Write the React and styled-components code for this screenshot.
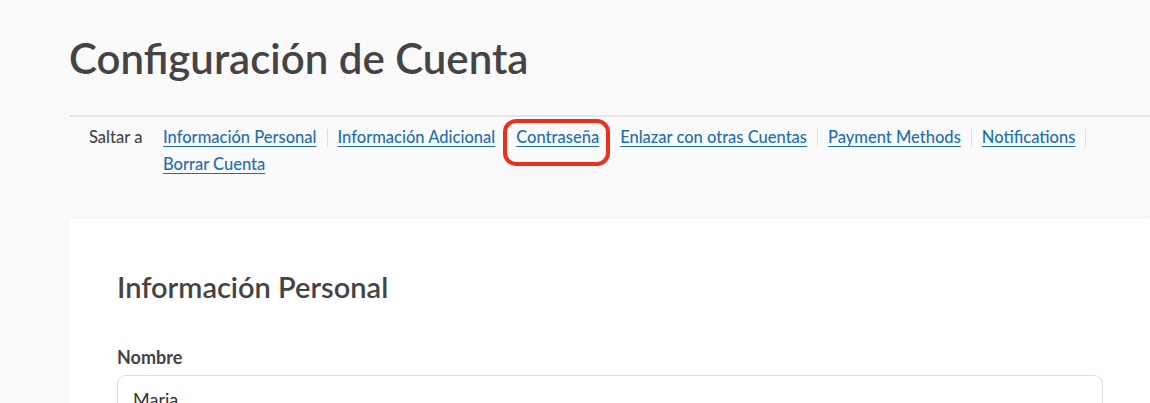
import React from 'react';
import styled, { createGlobalStyle } from 'styled-components';

const GlobalStyle = createGlobalStyle`
  html, body {
    margin: 0;
    padding: 0;
    background: #fafafa;
    overflow: hidden;
  }
  body {
    font-family: Lato, "Noto Sans", sans-serif;
    color: #444;
  }
`;

const links = [
  'Información Personal',
  'Información Adicional',
  'Contraseña',
  'Enlazar con otras Cuentas',
  'Payment Methods',
  'Notifications',
  'Borrar Cuenta',
];

const App = () => {
  return (
    <>
      <GlobalStyle />
      <Page>
        <Title>Configuración de Cuenta</Title>
        <JumpBar>
          <JumpLabel>Saltar a</JumpLabel>
          <JumpList>
            {links.map((label, i) => (
              <JumpItem key={label} last={i === links.length - 1}>
                <JumpLink href="#" highlight={label === 'Contraseña'}>
                  {label}
                </JumpLink>
              </JumpItem>
            ))}
          </JumpList>
        </JumpBar>
        <Card>
          <CardTitle>Información Personal</CardTitle>
          <Label>Nombre</Label>
          <Input defaultValue="Maria" />
        </Card>
      </Page>
    </>
  );
};

export default App;

const Page = styled.div`
  width: 1082px;
  padding: 28px 0 0 69px;
`;

const Title = styled.h1`
  margin: 0;
  font-size: 42px;
  font-weight: 600;
  line-height: 60px;
  color: #444;
  padding-bottom: 27px;
  border-bottom: 2px solid #e6e6e6;
`;

const JumpBar = styled.nav`
  display: flex;
  align-items: flex-start;
  padding: 7px 0 0 20px;
  font-size: 16.5px;
  line-height: 27px;
`;

const JumpLabel = styled.span`
  flex: none;
  width: 74px;
  color: #444;
  font-weight: 500;
`;

const JumpList = styled.ul`
  display: flex;
  flex-wrap: wrap;
  list-style: none;
  margin: 0;
  padding: 0;
  width: 945px;
`;

const JumpItem = styled.li`
  display: flex;
  align-items: center;
  &::after {
    content: '';
    display: ${props => (props.last ? 'none' : 'block')};
    width: 1px;
    height: 18px;
    margin: 0 10px;
    background: #ddd;
  }
`;

const JumpLink = styled.a`
  position: relative;
  color: #1f6fae;
  text-decoration: underline;
  text-underline-offset: 3px;
  font-weight: 500;
  &::before {
    content: '';
    display: ${props => (props.highlight ? 'block' : 'none')};
    position: absolute;
    left: -13px;
    right: -11px;
    top: -5px;
    bottom: -15px;
    border: 4px solid #e8321e;
    border-radius: 13px;
  }
`;

const Card = styled.section`
  margin-top: 41px;
  background: #fff;
  box-shadow: 0 0 6px rgba(0, 0, 0, 0.04);
  padding: 48px 48px 0 48px;
`;

const CardTitle = styled.h2`
  margin: 0;
  font-size: 29px;
  font-weight: 600;
  line-height: 40px;
  color: #444;
`;

const Label = styled.label`
  display: block;
  margin-top: 38px;
  font-size: 18px;
  font-weight: 700;
  line-height: 24px;
  color: #444;
`;

const Input = styled.input`
  display: block;
  box-sizing: border-box;
  width: 100%;
  height: 48px;
  margin-top: 6px;
  padding: 0 15px;
  border: 1px solid #dedede;
  border-radius: 9px;
  font-family: Lato, "Noto Sans", sans-serif;
  font-size: 18px;
  color: #333;
  background: #fff;
`;
